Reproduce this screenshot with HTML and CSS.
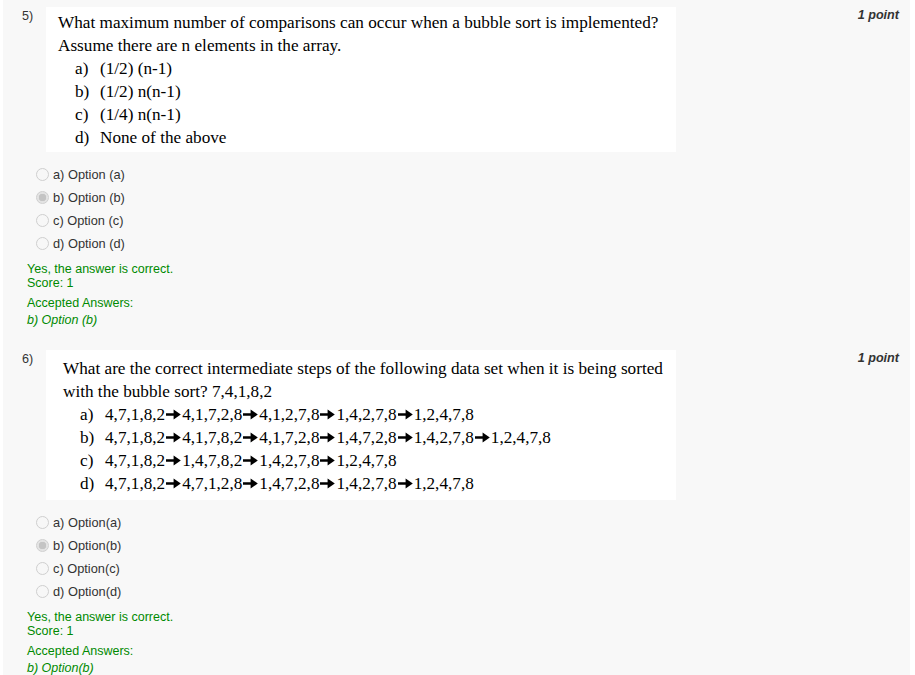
FILE: index.html
```html
<!DOCTYPE html>
<html>
<head>
<meta charset="utf-8">
<link rel="stylesheet" href="styles.css">
</head>
<body>
<div class="page">
  <section class="question">
    <div class="q-head">
      <div class="q-num">5)</div>
      <div class="q-box">
        <div class="q-text">What maximum number of comparisons can occur when a bubble sort is implemented?<br>Assume there are n elements in the array.</div>
        <ol class="q-choices">
          <li><span class="c-label">a)</span><span>(1/2) (n-1)</span></li>
          <li><span class="c-label">b)</span><span>(1/2) n(n-1)</span></li>
          <li><span class="c-label">c)</span><span>(1/4) n(n-1)</span></li>
          <li><span class="c-label">d)</span><span>None of the above</span></li>
        </ol>
      </div>
      <div class="q-points">1 point</div>
    </div>
    <div class="answers">
      <label class="answer"><input type="radio" name="q5" disabled><span>a) Option (a)</span></label>
      <label class="answer"><input type="radio" name="q5" disabled checked><span>b) Option (b)</span></label>
      <label class="answer"><input type="radio" name="q5" disabled><span>c) Option (c)</span></label>
      <label class="answer"><input type="radio" name="q5" disabled><span>d) Option (d)</span></label>
    </div>
    <div class="feedback">
      <div>Yes, the answer is correct.</div>
      <div>Score: 1</div>
      <div class="accepted">
        <div>Accepted Answers:</div>
        <div class="accepted-value">b) Option (b)</div>
      </div>
    </div>
  </section>

  <section class="question question-next">
    <div class="q-head">
      <div class="q-num">6)</div>
      <div class="q-box q-box-alt">
        <div class="q-text">What are the correct intermediate steps of the following data set when it is being sorted<br>with the bubble sort? 7,4,1,8,2</div>
        <ol class="q-choices">
          <li><span class="c-label">a)</span><span>4,7,1,8,2<svg class="arr" viewBox="0 0 17 11" aria-label="→"><path d="M1 4.2h9v2.6H1z M8.6 0.5L15.8 5.5L8.6 10.5z"/></svg>4,1,7,2,8<svg class="arr" viewBox="0 0 17 11" aria-label="→"><path d="M1 4.2h9v2.6H1z M8.6 0.5L15.8 5.5L8.6 10.5z"/></svg>4,1,2,7,8<svg class="arr" viewBox="0 0 17 11" aria-label="→"><path d="M1 4.2h9v2.6H1z M8.6 0.5L15.8 5.5L8.6 10.5z"/></svg>1,4,2,7,8<svg class="arr" viewBox="0 0 17 11" aria-label="→"><path d="M1 4.2h9v2.6H1z M8.6 0.5L15.8 5.5L8.6 10.5z"/></svg>1,2,4,7,8</span></li>
          <li><span class="c-label">b)</span><span>4,7,1,8,2<svg class="arr" viewBox="0 0 17 11" aria-label="→"><path d="M1 4.2h9v2.6H1z M8.6 0.5L15.8 5.5L8.6 10.5z"/></svg>4,1,7,8,2<svg class="arr" viewBox="0 0 17 11" aria-label="→"><path d="M1 4.2h9v2.6H1z M8.6 0.5L15.8 5.5L8.6 10.5z"/></svg>4,1,7,2,8<svg class="arr" viewBox="0 0 17 11" aria-label="→"><path d="M1 4.2h9v2.6H1z M8.6 0.5L15.8 5.5L8.6 10.5z"/></svg>1,4,7,2,8<svg class="arr" viewBox="0 0 17 11" aria-label="→"><path d="M1 4.2h9v2.6H1z M8.6 0.5L15.8 5.5L8.6 10.5z"/></svg>1,4,2,7,8<svg class="arr" viewBox="0 0 17 11" aria-label="→"><path d="M1 4.2h9v2.6H1z M8.6 0.5L15.8 5.5L8.6 10.5z"/></svg>1,2,4,7,8</span></li>
          <li><span class="c-label">c)</span><span>4,7,1,8,2<svg class="arr" viewBox="0 0 17 11" aria-label="→"><path d="M1 4.2h9v2.6H1z M8.6 0.5L15.8 5.5L8.6 10.5z"/></svg>1,4,7,8,2<svg class="arr" viewBox="0 0 17 11" aria-label="→"><path d="M1 4.2h9v2.6H1z M8.6 0.5L15.8 5.5L8.6 10.5z"/></svg>1,4,2,7,8<svg class="arr" viewBox="0 0 17 11" aria-label="→"><path d="M1 4.2h9v2.6H1z M8.6 0.5L15.8 5.5L8.6 10.5z"/></svg>1,2,4,7,8</span></li>
          <li><span class="c-label">d)</span><span>4,7,1,8,2<svg class="arr" viewBox="0 0 17 11" aria-label="→"><path d="M1 4.2h9v2.6H1z M8.6 0.5L15.8 5.5L8.6 10.5z"/></svg>4,7,1,2,8<svg class="arr" viewBox="0 0 17 11" aria-label="→"><path d="M1 4.2h9v2.6H1z M8.6 0.5L15.8 5.5L8.6 10.5z"/></svg>1,4,7,2,8<svg class="arr" viewBox="0 0 17 11" aria-label="→"><path d="M1 4.2h9v2.6H1z M8.6 0.5L15.8 5.5L8.6 10.5z"/></svg>1,4,2,7,8<svg class="arr" viewBox="0 0 17 11" aria-label="→"><path d="M1 4.2h9v2.6H1z M8.6 0.5L15.8 5.5L8.6 10.5z"/></svg>1,2,4,7,8</span></li>
        </ol>
      </div>
      <div class="q-points">1 point</div>
    </div>
    <div class="answers">
      <label class="answer"><input type="radio" name="q6" disabled><span>a) Option(a)</span></label>
      <label class="answer"><input type="radio" name="q6" disabled checked><span>b) Option(b)</span></label>
      <label class="answer"><input type="radio" name="q6" disabled><span>c) Option(c)</span></label>
      <label class="answer"><input type="radio" name="q6" disabled><span>d) Option(d)</span></label>
    </div>
    <div class="feedback">
      <div>Yes, the answer is correct.</div>
      <div>Score: 1</div>
      <div class="accepted">
        <div>Accepted Answers:</div>
        <div class="accepted-value">b) Option(b)</div>
      </div>
    </div>
  </section>
</div>
</body>
</html>
```

FILE: styles.css
```css
html, body {
  margin: 0;
  padding: 0;
  background: #ffffff;
}

body {
  font-family: "Liberation Sans", Arial, sans-serif;
  font-size: 12.6px;
  color: #333333;
}

.page {
  margin: 0 5px 0 3px;
  min-height: 675px;
  background: #f8f8f8;
  padding-top: 7px;
  box-sizing: border-box;
}

.question-next {
  margin-top: 21px;
}

.q-head {
  display: flex;
  align-items: flex-start;
}

.q-num {
  width: 24px;
  padding-left: 19px;
  padding-top: 2px;
  line-height: 14px;
  font-size: 12.6px;
}

.q-box {
  width: 630px;
  background: #ffffff;
  box-sizing: border-box;
  padding: 4px 0 3px 12px;
  font-family: "Liberation Serif", "Times New Roman", serif;
  font-size: 17.2px;
  line-height: 23px;
  color: #000000;
  white-space: nowrap;
}

.q-box-alt {
  padding: 7px 0 5px 17px;
}

.q-choices {
  list-style: none;
  margin: 0;
  padding: 0 0 0 17px;
}

.q-choices li {
  display: flex;
  height: 23px;
}

.c-label {
  width: 25px;
  flex: none;
}

.arr {
  display: inline-block;
  width: 17px;
  height: 11px;
  vertical-align: 0;
  fill: #000000;
}

.q-points {
  flex: 1;
  text-align: right;
  padding-right: 11px;
  padding-top: 1px;
  line-height: 14px;
  font-weight: bold;
  font-style: italic;
  font-size: 12.6px;
  color: #333333;
}

.answers {
  margin-top: 11px;
  padding-left: 33px;
}

.answer {
  display: flex;
  align-items: center;
  height: 23px;
  font-size: 12.8px;
  color: #333333;
}

.answer input {
  -webkit-appearance: none;
  appearance: none;
  width: 13px;
  height: 13px;
  margin: 0 4px 0 0;
  border: 1px solid #cfcfcf;
  border-radius: 50%;
  background: #f7f7f7;
  box-sizing: border-box;
}

.answer input:checked {
  background: radial-gradient(circle, #c4c4c4 0, #c4c4c4 3.5px, #e2e2e2 4px, #ececec 100%);
}

.feedback {
  margin-top: 7px;
  padding-left: 24px;
  color: #008a00;
  font-size: 12.5px;
  line-height: 14px;
}

.accepted {
  margin-top: 5px;
  line-height: 17px;
}

.accepted-value {
  font-style: italic;
}
```
